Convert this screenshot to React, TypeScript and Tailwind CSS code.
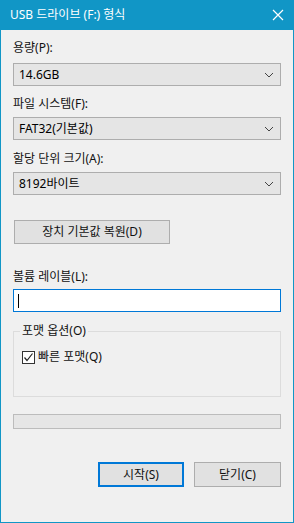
import React from "react";

const font = { fontFamily: '"Noto Sans", "Noto Sans CJK KR", sans-serif' };

function Chevron() {
  return (
    <svg width="10" height="6" viewBox="0 0 10 6" className="shrink-0">
      <path d="M1 1 L5 5 L9 1" fill="none" stroke="#444" strokeWidth="1" />
    </svg>
  );
}

function Combo({ value, mt }: { value: string; mt: string }) {
  return (
    <div
      className={`${mt} h-[23px] w-full border border-[#adadad] bg-[#e5e5e5] flex items-center justify-between pl-[5px] pr-[6px] text-[12px] text-black`}
    >
      <span>{value}</span>
      <Chevron />
    </div>
  );
}

export default function App() {
  return (
    <div
      className="w-[294px] h-[523px] flex flex-col bg-[#f0f0f0] border-x border-b border-[#1196c6] text-[12px] leading-[16px] text-[#111]"
      style={font}
    >
      <div className="h-[30px] shrink-0 bg-[#1196c6] flex items-center justify-between pl-[9px] pr-[9px] text-white text-[12px]">
        <span>USB 드라이브 (F:) 형식</span>
        <svg width="12" height="12" viewBox="0 0 12 12">
          <path d="M1 1 L11 11 M11 1 L1 11" stroke="white" strokeWidth="1.2" />
        </svg>
      </div>
      <div className="flex flex-col px-[12px]">
        <div className="mt-[10px] h-[16px]">용량(P):</div>
        <Combo value="14.6GB" mt="mt-[7px]" />
        <div className="mt-[10px] h-[16px]">파일 시스템(F):</div>
        <Combo value="FAT32(기본값)" mt="mt-[5px]" />
        <div className="mt-[11px] h-[16px]">할당 단위 크기(A):</div>
        <Combo value="8192바이트" mt="mt-[5px]" />
        <div className="mt-[25px] ml-[1px] w-[156px] h-[24px] border border-[#adadad] bg-[#e1e1e1] flex items-center justify-center">
          장치 기본값 복원(D)
        </div>
        <div className="mt-[25px] h-[16px]">볼륨 레이블(L):</div>
        <div className="mt-[4px] h-[23px] w-full border border-[#0078d7] bg-white flex items-center pl-[4px]">
          <div className="w-[1px] h-[14px] bg-black" />
        </div>
        <div className="mt-[13px] relative h-[72px] w-full">
          <div className="absolute left-0 right-0 top-[6px] bottom-0 border border-[#dcdcdc]" />
          <div className="absolute left-[7px] top-[-2px] px-[2px] bg-[#f0f0f0] h-[16px]">포맷 옵션(O)</div>
          <div className="absolute left-[9px] top-[24px] flex items-center gap-[3px]">
            <div className="w-[13px] h-[13px] border border-[#333] bg-white flex items-center justify-center">
              <svg width="11" height="11" viewBox="0 0 11 11">
                <path d="M1.5 5.5 L4 8.5 L9.5 1.5" fill="none" stroke="#222" strokeWidth="1.2" />
              </svg>
            </div>
            <span>빠른 포맷(Q)</span>
          </div>
        </div>
        <div className="mt-[17px] h-[15px] w-full border border-[#bcbcbc] bg-[#e6e6e6]" />
        <div className="mt-[33px] flex justify-end gap-[10px]">
          <div className="w-[86px] h-[25px] border-2 border-[#0078d7] bg-[#e1e1e1] flex items-center justify-center">
            시작(S)
          </div>
          <div className="w-[87px] h-[25px] border border-[#adadad] bg-[#e1e1e1] flex items-center justify-center">
            닫기(C)
          </div>
        </div>
      </div>
    </div>
  );
}
